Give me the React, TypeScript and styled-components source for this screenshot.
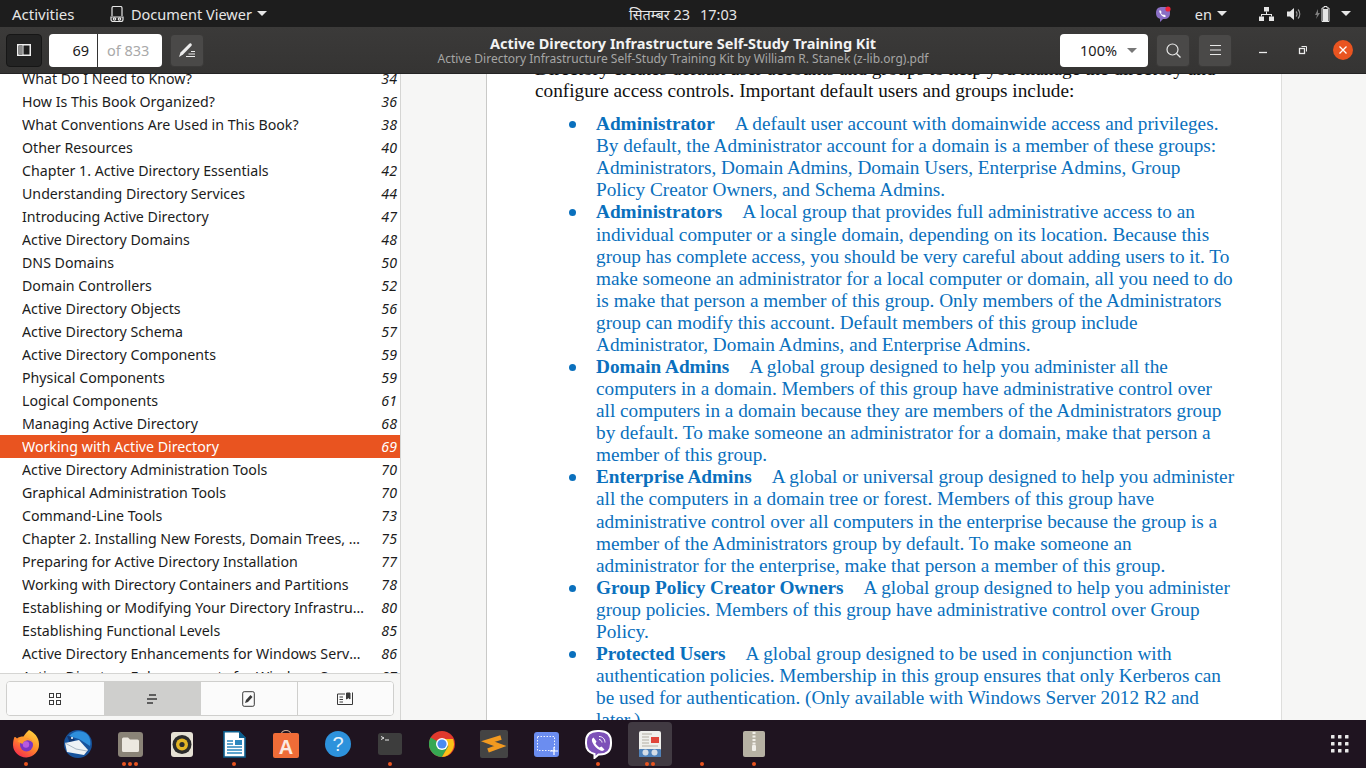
import React from 'react';
import styled, { createGlobalStyle } from 'styled-components';

const UI_FONT = '"Noto Sans", "DejaVu Sans", sans-serif';

const GlobalStyle = createGlobalStyle`
  html, body { margin: 0; padding: 0; height: 100%; overflow: hidden; }
  body { font-family: ${UI_FONT}; background: #f6f6f5; }
`;

const Screen = styled.div`
  width: 1366px;
  height: 768px;
  display: flex;
  flex-direction: column;
  overflow: hidden;
`;

/* ---------- gnome top bar ---------- */
const TopBar = styled.div`
  height: 27px;
  flex: none;
  display: grid;
  grid-template-columns: 1fr auto 1fr;
  align-items: center;
  background: #1d1d1d;
  color: #e6e6e6;
  font-size: 14.5px;
`;
const TopLeft = styled.div`
  display: flex;
  align-items: center;
  padding-left: 12px;
`;
const Activities = styled.span`
  font-size: 15px;
  width: 63px;
  white-space: nowrap;
`;
const AppMenu = styled.div`
  display: flex;
  align-items: center;
  gap: 7px;
  margin-left: 35px;
`;
const Clock = styled.div`
  display: flex;
  gap: 10px;
`;
const TopRight = styled.div`
  display: flex;
  align-items: center;
  justify-content: flex-end;
`;
const Caret = styled.span<{ $color?: string }>`
  width: 0;
  height: 0;
  margin-left: -2px;
  border-left: 5px solid transparent;
  border-right: 5px solid transparent;
  border-top: 5px solid ${(p) => p.$color || '#e6e6e6'};
`;
const Lang = styled.div`
  display: flex;
  align-items: center;
  gap: 7px;
  margin: 0 32px 0 24px;
  font-size: 14.5px;
`;
const Tray = styled.div`
  display: flex;
  align-items: center;
  gap: 13px;
  margin-right: 15px;
`;

/* ---------- header bar ---------- */
const Header = styled.div`
  height: 47px;
  flex: none;
  display: grid;
  grid-template-columns: 1fr auto 1fr;
  align-items: center;
  background: linear-gradient(#3b3a39, #353433);
  border-bottom: 1px solid #242424;
  box-sizing: border-box;
  position: relative;
  z-index: 2;
`;
const HeaderGroup = styled.div<{ $end?: boolean }>`
  display: flex;
  align-items: center;
  justify-content: ${(p) => (p.$end ? 'flex-end' : 'flex-start')};
  padding: ${(p) => (p.$end ? '0 3px 0 0' : '0 0 0 6px')};
`;
const ToolButton = styled.button<{ $pressed?: boolean }>`
  width: ${(p) => (p.$pressed ? 36 : 34)}px;
  height: 33px;
  padding: 0;
  margin-right: ${(p) => (p.$pressed ? 7 : 8)}px;
  display: flex;
  align-items: center;
  justify-content: center;
  border-radius: 4px;
  border: 1px solid ${(p) => (p.$pressed ? '#161616' : '#3a3938')};
  background: ${(p) => (p.$pressed ? '#232323' : '#4a4948')};
  color: #e8e8e8;
`;
const PageEntry = styled.div`
  width: 113px;
  height: 33px;
  display: flex;
  margin-right: 8px;
  background: #fff;
  border-radius: 4px;
  font-size: 14.5px;
  line-height: 33px;
`;
const PageNumber = styled.div`
  width: 49px;
  padding-right: 8px;
  box-sizing: border-box;
  text-align: right;
  color: #1a1a1a;
  border-right: 1px solid #333;
`;
const PageTotal = styled.div`
  padding-left: 9px;
  color: #a9a9a9;
`;
const TitleBlock = styled.div`
  text-align: center;
`;
const Title = styled.div`
  color: #f2f2f2;
  font-size: 14.5px;
  font-weight: 700;
  line-height: 16px;
`;
const Subtitle = styled.div`
  color: #a6a6a5;
  font-size: 12px;
  line-height: 15px;
`;
const ZoomBox = styled.div`
  width: 88px;
  height: 33px;
  margin-right: 8px;
  display: flex;
  align-items: center;
  justify-content: flex-end;
  gap: 12px;
  padding-right: 11px;
  box-sizing: border-box;
  background: #fff;
  border-radius: 4px;
  color: #1a1a1a;
  font-size: 14.5px;
`;
const WindowControls = styled.div`
  display: flex;
  align-items: center;
  margin-left: 3px;
`;
const WindowButton = styled.div`
  width: 40px;
  display: flex;
  justify-content: center;
`;
const CloseCircle = styled.div`
  width: 20px;
  height: 20px;
  border-radius: 50%;
  background: #e95420;
  display: flex;
  align-items: center;
  justify-content: center;
`;

/* ---------- sidebar ---------- */
const Workspace = styled.div`
  flex: 1;
  min-height: 0;
  display: flex;
`;
const Sidebar = styled.aside`
  width: 401px;
  flex: none;
  box-sizing: border-box;
  display: flex;
  flex-direction: column;
  background: #fff;
  border-right: 1px solid #d5d5d3;
`;
const OutlineClip = styled.div`
  flex: 1;
  min-height: 0;
  overflow: hidden;
`;
const Outline = styled.ul`
  list-style: none;
  margin: -7px 0 0;
  padding: 0;
`;
const OutlineRow = styled.li<{ $selected?: boolean }>`
  height: 23px;
  display: flex;
  align-items: center;
  padding: 0 3px 0 22px;
  font-size: 14.2px;
  background: ${(p) => (p.$selected ? '#e95420' : 'transparent')};
  color: ${(p) => (p.$selected ? '#fff' : '#1c1c1c')};
`;
const OutlineTitle = styled.span`
  flex: 1;
  min-width: 0;
  margin-right: 17px;
  white-space: nowrap;
  overflow: hidden;
  text-overflow: ellipsis;
`;
const OutlinePage = styled.span`
  font-style: italic;
`;
const TabsArea = styled.div`
  height: 47px;
  flex: none;
  box-sizing: border-box;
  padding: 7px 6px 6px;
  background: #f6f6f5;
  border-top: 1px solid #d5d5d3;
`;
const Tabs = styled.div`
  display: grid;
  grid-template-columns: repeat(4, 1fr);
  height: 33px;
  border: 1px solid #cfcfcd;
  border-radius: 4px;
  overflow: hidden;
  background: #fff;
`;
const Tab = styled.div<{ $active?: boolean }>`
  display: flex;
  align-items: center;
  justify-content: center;
  color: #3a3a3a;
  background: ${(p) => (p.$active ? '#cfcfcd' : '#fbfbfb')};
  & + & {
    border-left: 1px solid #cfcfcd;
  }
`;

/* ---------- document ---------- */
const Viewer = styled.main`
  flex: 1;
  min-width: 0;
  overflow: hidden;
  background: #f6f6f5;
  padding-left: 85px;
`;
const Page = styled.div`
  display: flow-root;
  width: 796px;
  height: 100%;
  box-sizing: border-box;
  background: #fff;
  border-left: 1px solid #c9c9c7;
  border-right: 1px solid #dededc;
  padding-left: 48px;
  font-family: "Liberation Serif", serif;
  font-size: 19.25px;
  line-height: 22.08px;
  color: #111;
`;
const DocIntro = styled.p`
  margin: -16px 0 0;
`;
const Line = styled.span`
  display: block;
  white-space: nowrap;
`;
const Terms = styled.ul`
  list-style: none;
  margin: 11px 0 0;
  padding: 0 0 0 61px;
  color: #0a70bd;
`;
const Term = styled.li`
  position: relative;
  &::before {
    content: '';
    position: absolute;
    left: -27px;
    top: 8px;
    width: 7px;
    height: 7px;
    border-radius: 50%;
    background: #0a70bd;
  }
`;
const TermName = styled.strong`
  margin-right: 20px;
`;

/* ---------- dock ---------- */
const Dock = styled.nav`
  height: 48px;
  flex: none;
  display: flex;
  background: #1f1420;
  position: relative;
  z-index: 2;
`;
const DockItem = styled.div<{ $active?: boolean }>`
  width: 52px;
  height: 48px;
  flex: none;
  display: flex;
  align-items: center;
  justify-content: center;
  position: relative;
  &::before {
    content: '';
    display: ${(p) => (p.$active ? 'block' : 'none')};
    position: absolute;
    left: 4px;
    right: 4px;
    top: 2px;
    bottom: 2px;
    border-radius: 4px;
    background: #413a42;
  }
  svg {
    position: relative;
  }
`;
const DotRow = styled.div`
  position: absolute;
  left: 0;
  right: 0;
  bottom: 2px;
  display: flex;
  justify-content: center;
  gap: 2px;
`;
const Dot = styled.span`
  width: 4px;
  height: 4px;
  border-radius: 50%;
  background: #e95420;
`;
const AppGrid = styled.div`
  margin-left: auto;
  width: 52px;
  display: flex;
  align-items: center;
  justify-content: center;
`;

const outline: [string, number, boolean?][] = [
  ['What Do I Need to Know?', 34],
  ['How Is This Book Organized?', 36],
  ['What Conventions Are Used in This Book?', 38],
  ['Other Resources', 40],
  ['Chapter 1. Active Directory Essentials', 42],
  ['Understanding Directory Services', 44],
  ['Introducing Active Directory', 47],
  ['Active Directory Domains', 48],
  ['DNS Domains', 50],
  ['Domain Controllers', 52],
  ['Active Directory Objects', 56],
  ['Active Directory Schema', 57],
  ['Active Directory Components', 59],
  ['Physical Components', 59],
  ['Logical Components', 61],
  ['Managing Active Directory', 68],
  ['Working with Active Directory', 69, true],
  ['Active Directory Administration Tools', 70],
  ['Graphical Administration Tools', 70],
  ['Command-Line Tools', 73],
  ['Chapter 2. Installing New Forests, Domain Trees, and Child Domains', 75],
  ['Preparing for Active Directory Installation', 77],
  ['Working with Directory Containers and Partitions', 78],
  ['Establishing or Modifying Your Directory Infrastructure', 80],
  ['Establishing Functional Levels', 85],
  ['Active Directory Enhancements for Windows Server 2012', 86],
  ['Active Directory Enhancements for Windows Server', 87],
];

const terms: { name: string; lines: string[] }[] = [
  {
    name: 'Administrator',
    lines: [
      'A default user account with domainwide access and privileges.',
      'By default, the Administrator account for a domain is a member of these groups:',
      'Administrators, Domain Admins, Domain Users, Enterprise Admins, Group',
      'Policy Creator Owners, and Schema Admins.',
    ],
  },
  {
    name: 'Administrators',
    lines: [
      'A local group that provides full administrative access to an',
      'individual computer or a single domain, depending on its location. Because this',
      'group has complete access, you should be very careful about adding users to it. To',
      'make someone an administrator for a local computer or domain, all you need to do',
      'is make that person a member of this group. Only members of the Administrators',
      'group can modify this account. Default members of this group include',
      'Administrator, Domain Admins, and Enterprise Admins.',
    ],
  },
  {
    name: 'Domain Admins',
    lines: [
      'A global group designed to help you administer all the',
      'computers in a domain. Members of this group have administrative control over',
      'all computers in a domain because they are members of the Administrators group',
      'by default. To make someone an administrator for a domain, make that person a',
      'member of this group.',
    ],
  },
  {
    name: 'Enterprise Admins',
    lines: [
      'A global or universal group designed to help you administer',
      'all the computers in a domain tree or forest. Members of this group have',
      'administrative control over all computers in the enterprise because the group is a',
      'member of the Administrators group by default. To make someone an',
      'administrator for the enterprise, make that person a member of this group.',
    ],
  },
  {
    name: 'Group Policy Creator Owners',
    lines: [
      'A global group designed to help you administer',
      'group policies. Members of this group have administrative control over Group',
      'Policy.',
    ],
  },
  {
    name: 'Protected Users',
    lines: [
      'A global group designed to be used in conjunction with',
      'authentication policies. Membership in this group ensures that only Kerberos can',
      'be used for authentication. (Only available with Windows Server 2012 R2 and',
      'later.)',
    ],
  },
];

const Firefox = () => (
  <svg width="28" height="28" viewBox="0 0 28 28">
    <defs>
      <linearGradient id="ff" x1="0.8" y1="0" x2="0.2" y2="1">
        <stop offset="0" stopColor="#ffd83f" />
        <stop offset="0.5" stopColor="#ff8a2a" />
        <stop offset="1" stopColor="#f5254f" />
      </linearGradient>
    </defs>
    <path d="M17 0c5 2.500 10 7 10 14a13 13 0 0 1-26 1c0-3 .5-6 1.500-8 .8 0 1.500.3 2.500 1.500C6.500 7 9 6.500 11.500 6.500 13 4 15 2 17 0z" fill="url(#ff)" />
    <circle cx="14.500" cy="15" r="6.500" fill="#7a35c4" />
    <circle cx="14" cy="14.500" r="3.200" fill="#b85be0" />
    <path d="M5.500 11.500c2-3 6-4.500 9.500-3.500 3 .5 5 2.500 6 5-2-2-4-3-6.500-2.500-2 .5-3.500 1.500-4 3.500z" fill="#ff9a2e" />
  </svg>
);
const Thunderbird = () => (
  <svg width="28" height="28" viewBox="0 0 28 28">
    <circle cx="14" cy="14" r="14" fill="#17539c" />
    <path d="M5 6c5-6 13-6 18-2 3 3 4 8 3 12L15 9z" fill="#2e8fdc" />
    <path d="M3 6c3 0 5 1 8 4l-5 3z" fill="#12366e" />
    <path d="M1 13l14-3 9 10-4 5L3 22z" fill="#eef2f5" />
    <path d="M1 13l11 6 11 2" fill="none" stroke="#aab8c4" />
    <circle cx="8" cy="8" r="1" fill="#fff" />
  </svg>
);
const Files = () => (
  <svg width="25" height="25" viewBox="0 0 25 25">
    <rect width="25" height="25" rx="3" fill="#8a8377" />
    <path d="M4 7a1.500 1.500 0 0 1 1.500-1.500H10l2 2h7.500A1.500 1.500 0 0 1 21 9v9.500a1.500 1.500 0 0 1-1.500 1.500h-14A1.500 1.500 0 0 1 4 18.500z" fill="#ece8e0" />
  </svg>
);
const Rhythmbox = () => (
  <svg width="22" height="25" viewBox="0 0 22 25">
    <rect width="22" height="25" rx="3" fill="#e6e1d5" />
    <circle cx="11" cy="12.500" r="9.500" fill="#2b2b2b" />
    <circle cx="11" cy="12.500" r="6" fill="#e3b526" />
    <circle cx="11" cy="12.500" r="2.600" fill="#2b2b2b" />
  </svg>
);
const Writer = () => (
  <svg width="23" height="27" viewBox="0 0 23 27">
    <path d="M1 .800h15l6 6V26H1z" fill="#fff" stroke="#0d5f8e" strokeWidth="1.600" />
    <path d="M16 0l7 7h-7z" fill="#0d5f8e" />
    <path d="M4 10h6M4 13h6M4 16h15M4 19h15M4 22h15" stroke="#2a86bd" strokeWidth="1.300" />
    <rect x="12" y="9" width="7" height="5" fill="#2a86bd" />
  </svg>
);
const Software = () => (
  <svg width="26" height="28" viewBox="0 0 26 28">
    <path d="M8 5c0-6 10-6 10 0" fill="none" stroke="#c9a690" strokeWidth="1.200" />
    <rect y="3" width="26" height="25" rx="2" fill="#ef6c37" />
    <text x="13" y="24" textAnchor="middle" fontFamily="Liberation Sans" fontWeight="700" fontSize="20" fill="#fbe9e0">A</text>
  </svg>
);
const Help = () => (
  <svg width="26" height="26" viewBox="0 0 26 26">
    <circle cx="13" cy="13" r="13" fill="#2d92dc" />
    <text x="13" y="20" textAnchor="middle" fontFamily="Liberation Sans" fontSize="20" fill="#e8f3fb">?</text>
  </svg>
);
const Terminal = () => (
  <svg width="24" height="22" viewBox="0 0 24 22">
    <rect width="24" height="22" rx="2.500" fill="#3d3d3d" />
    <path d="M3 3.500l3 1.500-3 1.500M7 7h4" fill="none" stroke="#e8e8e8" strokeWidth="1" />
  </svg>
);
const Chrome = () => (
  <svg width="26" height="26" viewBox="0 0 26 26">
    <circle cx="13" cy="13" r="13" fill="#e0392d" />
    <path d="M13 13L1.700 6.500A13 13 0 0 0 13 26l6.500-11z" fill="#36a852" />
    <path d="M13 8h11A13 13 0 0 1 13 26l6.500-11z" fill="#fbc118" />
    <circle cx="13" cy="13" r="6" fill="#fff" />
    <circle cx="13" cy="13" r="4.600" fill="#4a8bf0" />
  </svg>
);
const Sublime = () => (
  <svg width="28" height="28" viewBox="0 0 28 28">
    <rect width="28" height="28" rx="2" fill="#444444" />
    <path d="M21 7.500L8 11.500l12 4.500L8 20.500" fill="none" stroke="#f29a20" strokeWidth="4.500" />
  </svg>
);
const Screenshot = () => (
  <svg width="25" height="25" viewBox="0 0 25 25">
    <rect width="25" height="25" rx="3" fill="#6b8df0" />
    <rect x="3.500" y="4.500" width="17" height="14" fill="none" stroke="#eef2fe" strokeDasharray="1.500 1.500" />
    <path d="M20 15v8M16 19h8" stroke="#fff" strokeWidth="1.200" />
  </svg>
);
const Viber = () => (
  <svg width="27" height="29" viewBox="0 0 27 29">
    <path d="M12.500 1h2c8 0 11.500 4 11.500 11v1.500c0 7-3.500 11-11.500 11h-1L9.500 28v-4C3.500 22.500 1 19.500 1 13.500V12C1 5 4.500 1 12.500 1z" fill="#7d51b8" stroke="#fff" strokeWidth="2" />
    <path d="M8.500 7.500c-2 1-2 3-1 5 2 4 4 6 8 8 2 1 3 0 4-1l-3-3-2 1c-2-1-3-3-4-4l1-2z" fill="#fff" />
    <path d="M14 6.500c3.500 0 6 2.500 6 6M14 9.500c1.500 0 3 1.500 3 3" fill="none" stroke="#fff" strokeWidth="1" />
  </svg>
);
const Evince = () => (
  <svg width="22" height="26" viewBox="0 0 22 26">
    <rect width="22" height="26" rx="2" fill="#efefec" />
    <path d="M3 3h10M3 6h7M3 9h7M3 12h7M3 15h16" stroke="#b3aea3" strokeWidth="1" />
    <rect x="12" y="6" width="8" height="6" fill="#e0453a" />
    <rect y="18" width="22" height="8" rx="1" fill="#4f82ba" />
    <circle cx="6.500" cy="21.500" r="3" fill="#d5dde6" />
    <circle cx="15.500" cy="21.500" r="3" fill="#d5dde6" />
  </svg>
);
const Archive = () => (
  <svg width="22" height="26" viewBox="0 0 22 26">
    <rect width="22" height="26" rx="2" fill="#b6b1a3" />
    <path d="M11 1v13" stroke="#f1efe9" strokeWidth="3" strokeDasharray="2 1.500" />
    <rect x="9" y="14" width="4" height="6" rx="1" fill="#f1efe9" />
  </svg>
);

const dockApps: { icon: React.ReactNode; dots: number; active?: boolean }[] = [
  { icon: <Firefox />, dots: 1 },
  { icon: <Thunderbird />, dots: 0 },
  { icon: <Files />, dots: 3 },
  { icon: <Rhythmbox />, dots: 0 },
  { icon: <Writer />, dots: 1 },
  { icon: <Software />, dots: 0 },
  { icon: <Help />, dots: 0 },
  { icon: <Terminal />, dots: 1 },
  { icon: <Chrome />, dots: 0 },
  { icon: <Sublime />, dots: 0 },
  { icon: <Screenshot />, dots: 0 },
  { icon: <Viber />, dots: 1 },
  { icon: <Evince />, dots: 2, active: true },
  { icon: null, dots: 1 },
  { icon: <Archive />, dots: 1 },
];

const App = () => (
  <Screen>
    <GlobalStyle />
    <TopBar>
      <TopLeft>
        <Activities>Activities</Activities>
        <AppMenu>
          <svg width="14" height="16" viewBox="0 0 14 16" fill="none" stroke="#e6e6e6" strokeWidth="1.200">
            <path d="M2 10V2a1.500 1.500 0 0 1 1.500-1.500h7A1.500 1.500 0 0 1 12 2v8" />
            <path d="M1 11h12v2.500a2 2 0 0 1-2 2H3a2 2 0 0 1-2-2z" />
            <circle cx="4.500" cy="13" r="1.200" />
            <circle cx="9.500" cy="13" r="1.200" />
          </svg>
          Document Viewer
          <Caret />
        </AppMenu>
      </TopLeft>
      <Clock>
        <span>सितम्बर 23</span>
        <span>17:03</span>
      </Clock>
      <TopRight>
        <svg width="16" height="16" viewBox="0 0 16 16">
          <path d="M7 1h2c4 0 6 2 6 6 0 4-2 6-6 6H8l-3 3v-3.300C2 12 1 10 1 7c0-4 2-6 6-6z" fill="#8a6fc4" />
          <path d="M5 4c-1 1-1 2 0 3 1 2 2 3 4 4 1 0 2-.5 2-1L9 8.500 8 9C7 8.500 6.500 8 6 7l.7-1z" fill="#fff" />
          <circle cx="13" cy="3" r="2.600" fill="#f0243a" />
        </svg>
        <Lang>
          en
          <Caret />
        </Lang>
        <Tray>
          <svg width="15" height="14" viewBox="0 0 15 14" fill="#e6e6e6">
            <rect x="5" y="0" width="5" height="4.500" />
            <rect x="0" y="9.500" width="5" height="4.500" />
            <rect x="10" y="9.500" width="5" height="4.500" />
            <path d="M7 4.500h1V7h5v2.500h-1V8H3v1.500H2V7h5z" />
          </svg>
          <svg width="15" height="14" viewBox="0 0 15 14">
            <path d="M0 4.500h3L7 1v12L3 9.500H0z" fill="#e6e6e6" />
            <path d="M9 4.500a3.500 3.500 0 0 1 0 5M11 2.500a6.500 6.500 0 0 1 0 9" fill="none" stroke="#9a9a9a" strokeWidth="1.100" />
          </svg>
          <svg width="15" height="16" viewBox="0 0 15 16">
            <path d="M3 3L0 9h2l-1 4 4-6H3z" fill="#7d7d7d" />
            <path d="M9 .500h3V2h2v13.500H7V2h2z" fill="none" stroke="#e6e6e6" />
            <rect x="8" y="3" width="5" height="12" fill="#e6e6e6" />
          </svg>
          <Caret />
        </Tray>
      </TopRight>
    </TopBar>

    <Header>
      <HeaderGroup>
        <ToolButton $pressed>
          <svg width="14" height="12" viewBox="0 0 14 12">
            <rect x="0.750" y="0.750" width="12.500" height="10.500" fill="#1f1f1f" stroke="#f0f0f0" strokeWidth="1.500" />
            <rect x="2" y="2" width="3.500" height="8" fill="#8a8a8a" />
            <rect x="5.500" y="1" width="1" height="10" fill="#f0f0f0" />
          </svg>
        </ToolButton>
        <PageEntry>
          <PageNumber>69</PageNumber>
          <PageTotal>of 833</PageTotal>
        </PageEntry>
        <ToolButton>
          <svg width="16" height="14" viewBox="0 0 16 14">
            <path d="M0 14l1.500-4.500L10 1c.8-.8 1.700-.8 2.300-.2.700.7.600 1.500 0 2.200L4 11.500z" fill="#ececec" />
            <path d="M7 13.500h9M9.500 11h6.500M12 8.500h4" stroke="#ececec" />
          </svg>
        </ToolButton>
      </HeaderGroup>
      <TitleBlock>
        <Title>Active Directory Infrastructure Self-Study Training Kit</Title>
        <Subtitle>Active Directory Infrastructure Self-Study Training Kit by William R. Stanek (z-lib.org).pdf</Subtitle>
      </TitleBlock>
      <HeaderGroup $end>
        <ZoomBox>
          100%
          <Caret $color="#777" />
        </ZoomBox>
        <ToolButton>
          <svg width="15" height="15" viewBox="0 0 15 15" fill="none" stroke="#e8e8e8" strokeWidth="1.200">
            <circle cx="6.500" cy="6.500" r="5.500" />
            <path d="M10.500 10.500l4 4" />
          </svg>
        </ToolButton>
        <ToolButton>
          <svg width="11" height="10" viewBox="0 0 11 10" stroke="#e8e8e8">
            <path d="M0 .500h11M0 5h11M0 9.500h11" />
          </svg>
        </ToolButton>
        <WindowControls>
          <WindowButton>
            <svg width="10" height="10" viewBox="0 0 10 10" stroke="#ececec">
              <path d="M1 7.500h8" strokeWidth="1.300" />
            </svg>
          </WindowButton>
          <WindowButton>
            <svg width="10" height="10" viewBox="0 0 10 10" fill="none" stroke="#ececec">
              <rect x="1.500" y="3.500" width="5" height="5" strokeWidth="1.300" />
              <path d="M3.500 1.500h5v5" />
            </svg>
          </WindowButton>
          <WindowButton>
            <CloseCircle>
              <svg width="10" height="10" viewBox="0 0 10 10" stroke="#fff" strokeWidth="1.300">
                <path d="M1.500 1.500l7 7M8.500 1.500l-7 7" />
              </svg>
            </CloseCircle>
          </WindowButton>
        </WindowControls>
      </HeaderGroup>
    </Header>

    <Workspace>
      <Sidebar>
        <OutlineClip>
          <Outline>
            {outline.map(([title, page, selected]) => (
              <OutlineRow key={title} $selected={selected}>
                <OutlineTitle>{title}</OutlineTitle>
                <OutlinePage>{page}</OutlinePage>
              </OutlineRow>
            ))}
          </Outline>
        </OutlineClip>
        <TabsArea>
          <Tabs>
            <Tab>
              <svg width="12" height="12" viewBox="0 0 12 12" fill="none" stroke="#3a3a3a">
                <rect x="0.500" y="0.500" width="4" height="4" />
                <rect x="7.500" y="0.500" width="4" height="4" />
                <rect x="0.500" y="7.500" width="4" height="4" />
                <rect x="7.500" y="7.500" width="4" height="4" />
              </svg>
            </Tab>
            <Tab $active>
              <svg width="11" height="10" viewBox="0 0 11 10" stroke="#3a3a3a" strokeWidth="1.600">
                <path d="M2 1h7M0 5h10M0 9h6" />
              </svg>
            </Tab>
            <Tab>
              <svg width="13" height="16" viewBox="0 0 13 16">
                <rect x="0.700" y="0.700" width="11.600" height="14.600" rx="1.500" fill="none" stroke="#3a3a3a" />
                <path d="M3 12l1-3 4.500-5 2 2L6 11z" fill="#3a3a3a" />
              </svg>
            </Tab>
            <Tab>
              <svg width="16" height="14" viewBox="0 0 16 14" fill="none" stroke="#3a3a3a">
                <path d="M8 2H.500v10.500H8M8 12.500h7.500V.500" />
                <path d="M2.500 5h3.500M2.500 7.500h3.500M2.500 10h3.500" />
                <path d="M9.500 1h3.500v6l-1.700-1.300L9.500 7z" fill="#3a3a3a" />
              </svg>
            </Tab>
          </Tabs>
        </TabsArea>
      </Sidebar>

      <Viewer>
        <Page>
          <DocIntro>
            <Line>Directory creates default user accounts and groups to help you manage the directory and</Line>
            <Line>configure access controls. Important default users and groups include:</Line>
          </DocIntro>
          <Terms>
            {terms.map((term) => (
              <Term key={term.name}>
                {term.lines.map((line, i) => (
                  <Line key={line}>
                    {i === 0 && <TermName>{term.name}</TermName>}
                    {line}
                  </Line>
                ))}
              </Term>
            ))}
          </Terms>
        </Page>
      </Viewer>
    </Workspace>

    <Dock>
      {dockApps.map((app, i) => (
        <DockItem key={i} $active={app.active}>
          {app.icon}
          <DotRow>
            {Array.from({ length: app.dots }).map((_, d) => (
              <Dot key={d} />
            ))}
          </DotRow>
        </DockItem>
      ))}
      <AppGrid>
        <svg width="18" height="18" viewBox="0 0 18 18" fill="#e8e8e8">
          {[0, 7, 14].flatMap((y) =>
            [0, 7, 14].map((x) => <rect key={`${x}-${y}`} x={x} y={y} width="3.500" height="3.500" rx="0.500" />),
          )}
        </svg>
      </AppGrid>
    </Dock>
  </Screen>
);

export default App;
